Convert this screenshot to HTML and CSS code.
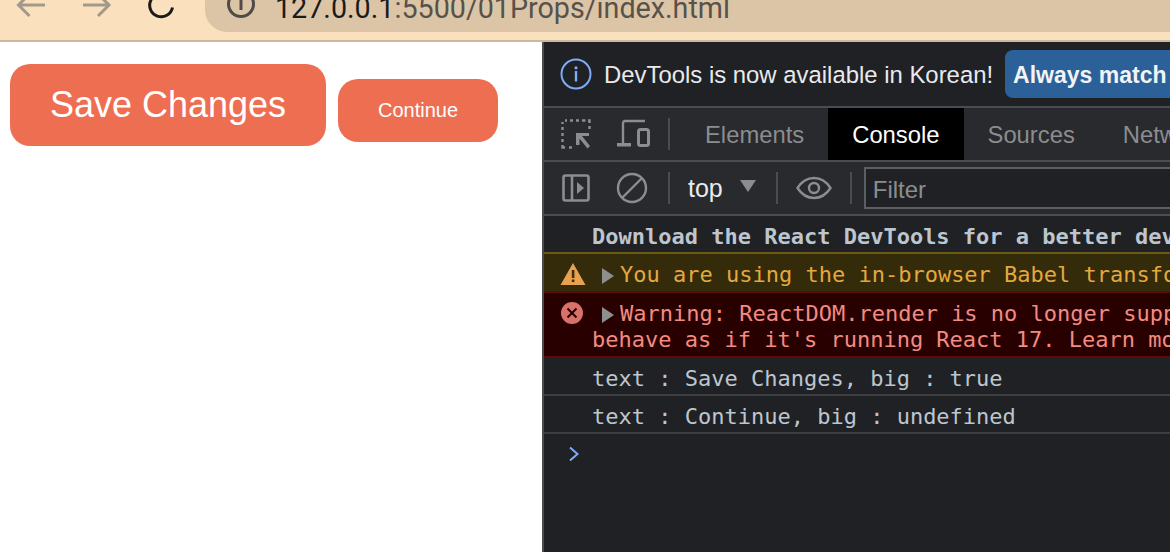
FILE: index.html
```html
<!DOCTYPE html>
<html lang="en">
<head>
<meta charset="utf-8">
<title>01Props</title>
<link rel="stylesheet" href="styles.css">
</head>
<body>
<header class="browser-bar">
  <svg class="nav-icon nav-back" width="34" height="30" viewBox="0 0 34 30"><path d="M31 8H5M15.500 -3L4.500 8l11 11" fill="none" stroke="#a3998b" stroke-width="3"/></svg>
  <svg class="nav-icon nav-forward" width="30" height="30" viewBox="0 0 30 30"><path d="M2 8h26M17 -3l11 11-11 11" fill="none" stroke="#a3998b" stroke-width="3"/></svg>
  <svg class="nav-icon nav-reload" width="30" height="30" viewBox="0 0 30 30"><path d="M25.500 10.500A11.500 11.500 0 1 1 21 -1" fill="none" stroke="#1c1b19" stroke-width="3"/><path d="M17 3h11v-9z" fill="#1c1b19"/></svg>
  <div class="url-bar">
    <svg class="url-info" width="30" height="30" viewBox="0 0 30 30"><circle cx="15" cy="7" r="12.500" fill="none" stroke="#4f4b47" stroke-width="3"/><path d="M15 1v12" stroke="#4f4b47" stroke-width="3"/></svg>
    <span class="url-text"><span class="url-host">127.0.0.1</span>:5500/01Props/index.html</span>
  </div>
</header>
<main class="split">
  <section class="page-pane">
    <button class="btn btn-big">Save Changes</button>
    <button class="btn btn-small">Continue</button>
  </section>
  <section class="devtools">
    <div class="infobar">
      <svg width="32" height="32" viewBox="0 0 32 32"><circle cx="16" cy="16" r="14.500" fill="none" stroke="#7cacf8" stroke-width="2"/><circle cx="16" cy="9.800" r="1.600" fill="#7cacf8"/><rect x="14.800" y="13" width="2.400" height="10.500" fill="#7cacf8"/></svg>
      <span class="infobar-text">DevTools is now available in Korean!</span>
      <span class="infobar-btn">Always match Chrome's language</span>
    </div>
    <div class="tabbar">
      <svg class="tool-inspect" width="30" height="30" viewBox="0 0 30 30"><path d="M1.500 3v2M4 1.500h2M9 1.500h3M15 1.500h3M21 1.500h3.500M27 1.500h1.500V4M28.500 7v3M1.500 8v3M1.500 14v3M1.500 20v3M1.500 26v2.500H4M8 28.500h3" fill="none" stroke="#8b8d90" stroke-width="2.400"/><path d="M15 14h13v3H21l8 10-2.500 2.500-8-10V26h-3.500z" fill="#8b8d90"/></svg>
      <svg class="tool-device" width="34" height="30" viewBox="0 0 34 30"><path d="M6 27V4a2 2 0 0 1 2-2h20" fill="none" stroke="#8b8d90" stroke-width="2.400"/><path d="M0 24h14v3.500H0z" fill="#8b8d90"/><rect x="21.500" y="10.500" width="10" height="16" rx="2" fill="none" stroke="#8b8d90" stroke-width="3"/></svg>
      <span class="vsep"></span>
      <span class="tab">Elements</span>
      <span class="tab tab-active">Console</span>
      <span class="tab">Sources</span>
      <span class="tab">Network</span>
    </div>
    <div class="toolbar">
      <svg class="tool-sidebar" width="28" height="28" viewBox="0 0 28 28"><rect x="1.500" y="1.500" width="25" height="25" rx="2" fill="none" stroke="#8b8d90" stroke-width="2.600"/><path d="M10 2v24" stroke="#8b8d90" stroke-width="2.600"/><path d="M15 8l7 6-7 6z" fill="#8b8d90"/></svg>
      <svg class="tool-clear" width="32" height="32" viewBox="0 0 32 32"><circle cx="16" cy="16" r="14" fill="none" stroke="#8b8d90" stroke-width="2.400"/><path d="M6 26L26 6" stroke="#8b8d90" stroke-width="2.400"/></svg>
      <span class="vsep vsep-a"></span>
      <span class="context">top</span>
      <svg class="context-arrow" width="16" height="12" viewBox="0 0 16 12"><path d="M0 0h16L8 12z" fill="#8b8d90"/></svg>
      <span class="vsep vsep-b"></span>
      <svg class="tool-eye" width="36" height="24" viewBox="0 0 36 24"><path d="M1.500 12C6 5 11.500 2 18 2s12 3 16.500 10C30 19 24.500 22 18 22S6 19 1.500 12z" fill="none" stroke="#8b8d90" stroke-width="2.400"/><circle cx="18" cy="12" r="5" fill="none" stroke="#8b8d90" stroke-width="2.400"/></svg>
      <span class="vsep vsep-c"></span>
      <div class="filter">Filter</div>
    </div>
    <div class="log">
      <div class="row row-plain row-bold">Download the React DevTools for a better development experience</div>
      <div class="row row-warn">
        <svg class="row-icon" width="26" height="24" viewBox="0 0 26 24"><path d="M13 1l12.500 22H.5z" fill="#e8a24f"/><rect x="11.800" y="8" width="2.600" height="8" fill="#3a2f0a"/><rect x="11.800" y="17.500" width="2.600" height="2.600" fill="#3a2f0a"/></svg>
        <svg class="row-arrow" width="12" height="16" viewBox="0 0 12 16"><path d="M0 0l12 8-12 8z" fill="#8e8e8e"/></svg>
        <span>You are using the in-browser Babel transformer. Be sure to precompile</span>
      </div>
      <div class="row row-error">
        <svg class="row-icon" width="24" height="24" viewBox="0 0 24 24"><circle cx="12" cy="12" r="11" fill="#d9716b"/><path d="M7.500 7.500l9 9M16.500 7.500l-9 9" stroke="#280000" stroke-width="2"/></svg>
        <svg class="row-arrow" width="12" height="16" viewBox="0 0 12 16"><path d="M0 0l12 8-12 8z" fill="#8e8e8e"/></svg>
        <span>Warning: ReactDOM.render is no longer supported in React 18.<br><span class="wrap-line">behave as if it's running React 17. Learn more</span></span>
      </div>
      <div class="row row-plain">text : Save Changes, big : true</div>
      <div class="row row-plain">text : Continue, big : undefined</div>
      <div class="prompt"><svg width="12" height="16" viewBox="0 0 12 16"><path d="M2 1.500L9.500 8 2 14.500" fill="none" stroke="#7cacf8" stroke-width="2"/></svg></div>
    </div>
  </section>
</main>
</body>
</html>
```
FILE: styles.css
```css
* { box-sizing: border-box; }
html, body { margin: 0; height: 100%; overflow: hidden; background: #fff; }
body { width: 1170px; height: 552px; display: flex; flex-direction: column; }

.browser-bar {
  flex: 0 0 42px;
  background: #fae0bc;
  border-bottom: 2px solid #cdb99d;
  display: flex;
  align-items: flex-end;
  overflow: hidden;
}
.nav-icon { flex: none; margin-bottom: 13px; overflow: visible; }
.nav-back { margin-left: 14px; }
.nav-forward { margin-left: 33px; }
.nav-reload { margin-left: 36px; }
.url-bar {
  flex: 1;
  height: 60px;
  margin-left: 28px;
  margin-bottom: 8px;
  background: #dcc5a6;
  border-radius: 0 0 0 22px;
  display: flex;
  align-items: flex-end;
  padding-left: 21px;
}
.url-info { flex: none; margin-bottom: 5px; overflow: visible; }
.url-text {
  margin-left: 19px;
  margin-bottom: 9px;
  font: 28.700px/30px Roboto, "Liberation Sans", sans-serif;
  color: #57524c;
  white-space: nowrap;
}
.url-host { color: #1c1b19; }

.split { flex: 1; display: flex; min-height: 0; }
.page-pane {
  flex: 0 0 542px;
  padding: 22px 10px 0;
  display: flex;
  align-items: flex-start;
  gap: 12px;
  background: #fff;
}
.btn {
  border: 0;
  background: #ee6e52;
  color: #fff;
  font-family: "Liberation Sans", Arial, sans-serif;
  padding: 0;
}
.btn-big { width: 316px; height: 82px; border-radius: 20px; font-size: 36px; }
.btn-small { width: 160px; height: 63px; border-radius: 20px; font-size: 20px; margin-top: 15px; }

.devtools {
  flex: 1;
  min-width: 0;
  background: #202124;
  border-left: 2px solid #494c50;
  overflow: hidden;
  font-family: "Liberation Sans", Arial, sans-serif;
  white-space: nowrap;
}
.infobar {
  height: 66px;
  border-bottom: 2px solid #494c50;
  display: flex;
  align-items: center;
  padding-left: 16px;
  font-size: 23.900px;
  color: #e8eaed;
}
.infobar svg { flex: none; }
.infobar-text { margin-left: 12px; padding-top: 2px; }
.infobar-btn {
  flex: none;
  margin-left: 12px;
  height: 48px;
  line-height: 50px;
  padding: 0 8px;
  background: #2c6099;
  border-radius: 8px;
  font-size: 23px;
  font-weight: bold;
  color: #f1f3f5;
}
.tabbar, .toolbar {
  height: 54px;
  background: #292a2d;
  border-bottom: 2px solid #494c50;
  display: flex;
  align-items: center;
}
.tabbar svg, .toolbar svg { flex: none; }
.tool-inspect { margin-left: 17px; }
.tool-device { margin-left: 26px; }
.vsep { flex: none; width: 2px; height: 32px; background: #494c50; }
.tabbar .vsep { margin-left: 17px; margin-right: 11px; }
.tab {
  flex: none;
  height: 52px;
  line-height: 54px;
  padding: 0 24px;
  font-size: 23.800px;
  color: #8b8d90;
}
.tab-active { background: #000; color: #fff; }
.tool-sidebar { margin-left: 18px; }
.tool-clear { margin-left: 26px; }
.vsep-a { margin-left: 20px; }
.context { margin-left: 18px; font-size: 25px; color: #e8eaed; }
.context-arrow { margin-left: 17px; margin-top: -4px; }
.vsep-b { margin-left: 20px; }
.tool-eye { margin-left: 18px; }
.vsep-c { margin-left: 18px; }
.filter {
  flex: 1;
  margin-left: 12px;
  height: 42px;
  line-height: 42px;
  padding-left: 7px;
  background: #202124;
  border: 2px solid #5b5e62;
  border-right: 0;
  font-size: 24px;
  color: #8b8d90;
}
.log {
  font: 22px/26px "DejaVu Sans Mono", "Liberation Mono", monospace;
  color: #bdc6cf;
}
.row { position: relative; padding: 8px 0 3px 48px; border-bottom: 2px solid #3c3e41; }
.row-plain { height: 38px; }
.row-bold { font-weight: bold; height: 38px; border-bottom-color: #6b5a12; }
.row-warn {
  height: 39px;
  padding-left: 76px;
  background: #332b09;
  color: #e5a83e;
  border-bottom-color: #5c0b0b;
}
.row-error {
  height: 65px;
  padding-left: 76px;
  background: #290000;
  color: #f28b82;
  border-bottom-color: #5c0b0b;
}
.wrap-line { margin-left: -28px; }
.row-icon { position: absolute; left: 16px; top: 8px; }
.row-error .row-icon { top: 8px; }
.row-arrow { position: absolute; left: 58px; top: 14px; }
.prompt { padding: 12px 0 0 24px; display: flex; }
```
